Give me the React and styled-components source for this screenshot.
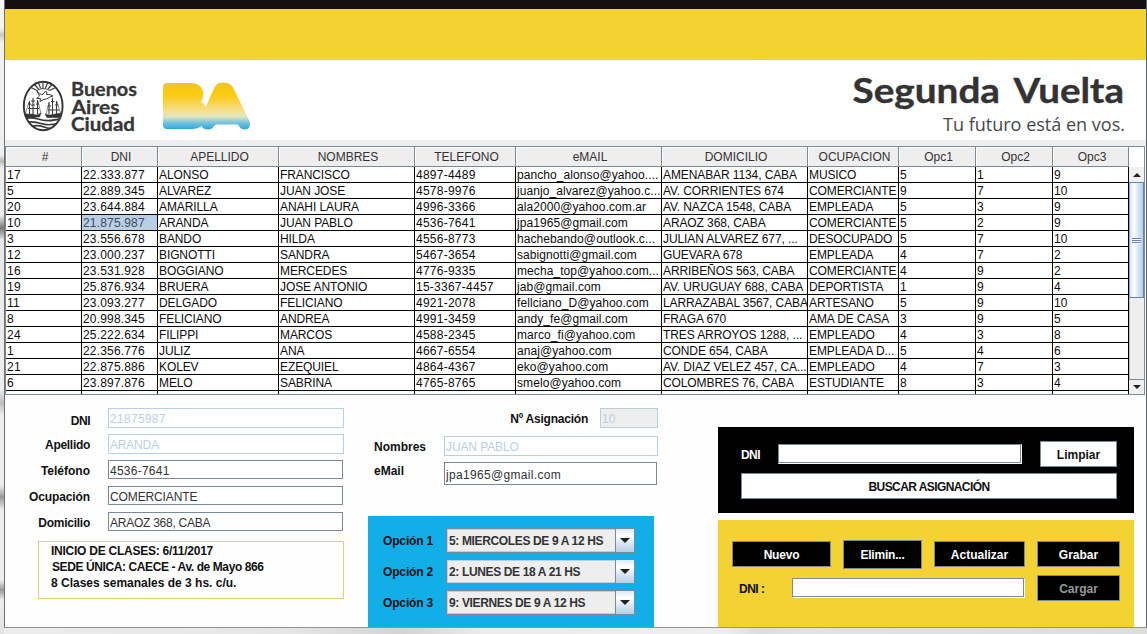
import React from "react";
import styled, { createGlobalStyle } from "styled-components";

const GlobalStyle = createGlobalStyle`
  * { box-sizing: border-box; }
  body { margin: 0; background: #fff; overflow: hidden; }
  body, input, button { font-family: "Liberation Sans", Arial, sans-serif; font-size: 12px; }
`;

const Desktop = styled.div`
  width: 1147px;
  height: 634px;
  padding-left: 4px;
  display: flex;
  flex-direction: column;
  background: linear-gradient(180deg, #f4f4f4 0, #f4f4f4 28px, #c9c9c9 35px, #f0f0f0 42px, #f0f0f0 155px, #b5b5b5 161px, #eee 168px, #eee 215px, #777 228px, #e8e8e8 240px, #eee 390px, #bbb 403px, #eee 415px, #eee 485px, #999 497px, #eee 510px, #eee 580px, #999 590px, #eee 600px, #e4e4e4 628px, #e4e4e4 634px);
`;
const Frame = styled.main`
  height: 628px;
  border-left: 1px solid #6f6f6f;
  border-right: 1px solid #5c6268;
  border-bottom: 1px solid #929292;
  background: #fefefe;
  display: flex;
  flex-direction: column;
`;
const StatusStrip = styled.div`
  height: 6px;
  background: linear-gradient(90deg, #ececec 0, #e6e6e6 25%, #d3d3d3 35%, #ececec 42%, #eee 63%, #ddd 66%, #e2e2e2 70%, #ddd 100%);
`;
const Banner = styled.div`
  flex: none;
  height: 60px;
  border-top: 9px solid #12110f;
  border-bottom: 1px solid #e6d070;
  background: linear-gradient(180deg, #f4d233 0, #f4d233 36px, #f0d328 44px, #f2d434 50px);
`;
const Brand = styled.header`
  flex: none;
  height: 80px;
  padding-right: 12px;
  display: flex;
  justify-content: space-between;
  background: #fff;
`;
const TableArea = styled.section`
  flex: none;
  height: 255px;
  padding: 6px 1px 0 0;
  background: linear-gradient(#eee 6px, #fff 6px);
`;
const TableBox = styled.div`
  display: flex;
  width: 1140px;
  height: 249px;
  border: 1px solid #7a8a99;
  border-top: 0;
  overflow: hidden;
`;
const columns = "76px 76px 121px 136px 101px 146px 146px 91px 77px 77px 76px";
const Grid = styled.div`
  flex: none;
  width: 1123px;
`;
const HeadRow = styled.div`
  display: grid;
  grid-template-columns: ${columns};
  height: 21px;
  border-top: 1px solid #7a8a99;
`;
const HeadCell = styled.div`
  height: 20px;
  background: #eee;
  color: #333;
  border-right: 1px solid #7a8a99;
  border-bottom: 1px solid #7a8a99;
  box-shadow: inset 1px 1px #fff;
  text-align: center;
  line-height: 21px;
  padding-left: 3px;
`;
const Row = styled.div`
  display: grid;
  grid-template-columns: ${columns};
  height: 16px;
`;
const Cell = styled.div`
  border-right: 1px solid #000;
  border-bottom: 1px solid #000;
  padding-left: 1px;
  line-height: 16px;
  white-space: pre;
  overflow: hidden;
  color: ${(p) => (p.$selected ? "#444c58" : "#0c0c0c")};
  background: ${(p) => (p.$selected ? "#b8cfe5" : "#fff")};
  letter-spacing: ${(p) => p.$ls}px;
`;
const Scroll = styled.div`
  flex: 1;
  display: flex;
  flex-direction: column;
  border-top: 1px solid #7a8a99;
`;
const Corner = styled.div`
  height: 20px;
  background: #fff;
`;
const ScrollButton = styled.div`
  flex: none;
  height: 15px;
  display: grid;
  place-items: center;
  background: #f1f1f1;
  border: solid #7a8a99;
  border-width: ${(p) => (p.$down ? "1px 0 0" : "0")};
`;
const Thumb = styled.div`
  height: 116px;
  border: 1px solid #6382bf;
  border-left-color: #8fa6cf;
  background: linear-gradient(90deg, #d5e3f1, #fff 30%, #dce8f3 60%, #b8cfe5);
  display: flex;
  flex-direction: column;
  align-items: center;
  justify-content: center;
  gap: 1px;
`;
const Grip = styled.i`
  width: 9px;
  height: 1px;
  background: #6382bf;
  box-shadow: 0 1px #fff;
`;
const Track = styled.div`
  flex: 1;
  border-left: 1px solid #b4bcc4;
  background: #eee;
`;
const Lower = styled.section`
  flex: 1;
  display: grid;
  grid-template-columns: 363px 350px 1fr;
`;
const Personal = styled.div`
  padding: 13px 0 0 0;
  display: flex;
  flex-direction: column;
`;
const FieldRow = styled.div`
  display: flex;
  align-items: flex-start;
  height: ${(p) => p.$h || 26}px;
`;
const Label = styled.label`
  flex: none;
  width: ${(p) => p.$w}px;
  padding-top: ${(p) => p.$top ?? 5}px;
  padding-left: ${(p) => p.$indent || 0}px;
  line-height: 14px;
  font-weight: bold;
  text-align: ${(p) => p.$align || "left"};
  color: ${(p) => p.$color || "#111"};
  white-space: nowrap;
  letter-spacing: ${(p) => p.$ls || 0}px;
`;
const Input = styled.input`
  flex: none;
  width: ${(p) => p.$w}px;
  height: ${(p) => p.$h || (p.disabled ? 20 : 19)}px;
  margin: 0 0 0 ${(p) => p.$ml || 0}px;
  padding: 2px 1px 0;
  border-radius: 0;
  outline: 0;
  border: 1px solid ${(p) => (p.disabled ? "#b8cfe0" : "#7a8a99")};
  background: ${(p) => (p.$muted ? "#eee" : "#fff")};
  color: ${(p) => (p.disabled ? "#b8cfe5" : "#333")};
  letter-spacing: ${(p) => p.$ls || 0}px;
`;
const LightInput = styled(Input)`
  border-right-color: #fff;
  border-bottom-color: #fff;
  box-shadow: inset -1px -1px #7a8a99;
`;
const Notice = styled.div`
  width: 306px;
  height: 58px;
  margin: 3px 0 0 33px;
  padding: 1px 12px;
  border: 1px solid #e0d468;
  font-weight: bold;
  line-height: 16px;
  color: #111;
`;
const NoticeLine = styled.div`
  padding-left: ${(p) => p.$indent || 0}px;
  letter-spacing: ${(p) => p.$ls || 0}px;
  white-space: nowrap;
`;
const Middle = styled.div`
  padding-top: 13px;
  display: flex;
  flex-direction: column;
`;
const Options = styled.div`
  width: 286px;
  height: 111px;
  margin-top: auto;
  padding: 12px 0 0 15px;
  display: flex;
  flex-direction: column;
  gap: 6px;
  background: #11aee8;
`;
const OptionRow = styled.div`
  display: flex;
  height: 25px;
`;
const Combo = styled.div`
  width: 189px;
  display: flex;
  border: 1px solid #7a8a99;
  box-shadow: inset 0 0 0 1px #b8cfe5;
  background: #eee;
`;
const ComboText = styled.div`
  flex: 1;
  padding-left: 2px;
  line-height: 24px;
  font-weight: bold;
  color: #333;
  white-space: nowrap;
  letter-spacing: -0.36px;
`;
const ComboArrow = styled.div`
  width: 19px;
  border-left: 1px solid #7a8a99;
  display: grid;
  place-items: center;
  background: linear-gradient(#dfe9f3, #fff 30%, #dce8f3 60%, #b8cfe5);
`;
const Actions = styled.div`
  padding: 32px 12px 0 0;
  display: flex;
  flex-direction: column;
  gap: 7px;
`;
const SearchPanel = styled.div`
  height: 86px;
  padding: 14px 16px 0 23px;
  background: #000;
  display: flex;
  flex-direction: column;
  gap: 6px;
`;
const SearchRow = styled.div`
  height: 26px;
  display: flex;
  align-items: center;
`;
const Button = styled.button`
  flex: none;
  width: ${(p) => p.$w}px;
  height: ${(p) => p.$h || 26}px;
  margin: 0 0 0 ${(p) => p.$ml || 0}px;
  padding: 1px 0 0;
  border: 1px solid #7a8a99;
  border-radius: 0;
  font-weight: bold;
  background: ${(p) => (p.$dark ? "#000" : "#fff")};
  color: ${(p) => (p.disabled ? "#999" : p.$dark ? "#fff" : "#111")};
  letter-spacing: ${(p) => p.$ls || 0}px;
`;
const CrudPanel = styled.div`
  flex: 1;
  padding: 20px 13px 0 14px;
  background: #f4d233;
`;
const CrudRow = styled.div`
  display: flex;
  align-items: center;
  gap: 12px;
  height: 28px;
`;
const LoadRow = styled.div`
  display: flex;
  align-items: center;
  height: 26px;
  margin-top: 7px;
  padding-left: 7px;
`;

const Arrow = ({ up, w = 8 }) => (
  <svg width={w} height={w / 2} viewBox="0 0 8 4">
    <path d={up ? "M0 4 4 0 8 4Z" : "M0 0 8 0 4 4Z"} fill="#222" />
  </svg>
);

const CityLogo = () => (
  <svg width="260" height="80" viewBox="5 60 260 80">
    <defs>
      <linearGradient id="ba" gradientUnits="userSpaceOnUse" x1="0" y1="82" x2="0" y2="130">
        <stop offset="0" stopColor="#eec42a" />
        <stop offset=".25" stopColor="#fccb0c" />
        <stop offset=".38" stopColor="#fad03a" />
        <stop offset=".6" stopColor="#f6e08e" />
        <stop offset=".72" stopColor="#e2e6c0" />
        <stop offset=".84" stopColor="#7cc6dc" />
        <stop offset="1" stopColor="#1fa4dc" />
      </linearGradient>
      <clipPath id="seal"><ellipse cx="43.2" cy="106" rx="19" ry="24" /></clipPath>
    </defs>
    <ellipse cx="43.2" cy="106" rx="19.4" ry="24.2" fill="#fff" stroke="#353535" strokeWidth="1.9" />
    <g clipPath="url(#seal)" stroke="#3a3a3a" fill="none">
      <path d="M43 88V83M40.500 88 38.500 83M45.500 88 47.500 83M38.500 89 34.500 84.500M48 89 52 84.500M37 90.500 31 87.500M49.500 90.500 55.500 87.500" strokeWidth="1.2" />
      <path d="M37 90.500Q43 86.500 49.500 90.500" strokeWidth="1" />
      <path d="M37 91Q39 95 43 94.500L45 91.500 47 92 46.500 94.500Q50 94 53 96Q49 97 46.500 99L43 99.500 40 101.500 40.500 98.500 36.500 98.500Q38.500 97 39.500 96Z" strokeWidth="1" />
      <path d="M29.500 101V115M33 98V115M37.500 100V114M49 102V114M52.500 98V115M56.500 101V115" strokeWidth="1.1" />
      <path d="M28 104H31M31 101H35M36 104H39M31 105H35M28 108.500H39M47.500 106H51M51 101.500H54.500M55 105H58.500M48 110H59" strokeWidth="1" />
      <path d="M29 102 25.500 113M38 101 41 114M49 103 46 114M57 102 60.500 113" strokeWidth=".6" />
      <path d="M24 113Q28 115 32 114Q37 116.500 41 113L39.500 117H26ZM45 114Q50 116 55 114L62 113 59 117.500H47Z" fill="#333" strokeWidth=".6" />
      <path d="M22 119Q30 116.500 38 119T54 120T65 118" strokeWidth="1.8" />
      <path d="M24 123Q32 120.500 41 123.500T62 122" strokeWidth="1.6" />
      <path d="M28 127.500Q36 124 44 127T58 126" strokeWidth="1.6" />
    </g>
    <g fill="#363636" stroke="#363636" strokeWidth=".3" fontFamily="Lato, sans-serif" fontWeight="700" fontSize="18">
      <text x="71" y="95.800" textLength="66" lengthAdjust="spacingAndGlyphs">Buenos</text>
      <text x="71.500" y="113.500" textLength="48" lengthAdjust="spacingAndGlyphs">Aires</text>
      <text x="71" y="131" textLength="64" lengthAdjust="spacingAndGlyphs">Ciudad</text>
    </g>
    <path d="M167 83H191C200 83 204.500 90 203.300 96Q202.500 100 200.800 102.500Q204.500 102.500 205 107.500Q207.500 104 208.500 100.500L214.500 87.500Q217 82.500 223 82.500Q230 82.500 233 87.500L249.500 121C251.500 126 248.500 129.500 245 129.500Q240.500 129.500 238.800 125.800Q238.300 124.500 236 124.500H217Q214.800 124.500 213.800 126.300Q212 129.500 208 129.500Q203.500 129.500 201.500 126Q197.500 129 192 129H167Q163 129 163 125V87Q163 83 167 83Z" fill="url(#ba)" />
  </svg>
);

const Slogan = () => (
  <svg width="284" height="80" viewBox="850 60 284 80">
    <g fontFamily="Lato, sans-serif" fontWeight="700" fontSize="34.500" fill="#333" stroke="#333" strokeWidth=".4">
      <text x="852.500" y="103" textLength="147.500" lengthAdjust="spacingAndGlyphs">Segunda</text>
      <text x="1013.500" y="103" textLength="110.500" lengthAdjust="spacingAndGlyphs">Vuelta</text>
    </g>
    <text x="943" y="130.500" textLength="182" lengthAdjust="spacingAndGlyphs" fontFamily="Open Sans, sans-serif" fontSize="17.500" fill="#484848">Tu futuro está en vos.</text>
  </svg>
);

const heads = ["#", "DNI", "APELLIDO", "NOMBRES", "TELEFONO", "eMAIL", "DOMICILIO", "OCUPACION", "Opc1", "Opc2", "Opc3"];
const spacing = [0.3, 0.17, -0.1, -0.1, 0.25, 0.08, -0.1, -0.12, 0.2, 0.2, 0.2];
const rows = [
  ["17", "22.333.877", "ALONSO", "FRANCISCO", "4897-4489", "pancho_alonso@yahoo....", "AMENABAR 1134, CABA", "MUSICO", "5", "1", "9"],
  ["5", "22.889.345", "ALVAREZ", "JUAN JOSE", "4578-9976", "juanjo_alvarez@yahoo.c...", "AV. CORRIENTES 674", "COMERCIANTE", "9", "7", "10"],
  ["20", "23.644.884", "AMARILLA", "ANAHI LAURA", "4996-3366", "ala2000@yahoo.com.ar", "AV. NAZCA 1548, CABA", "EMPLEADA", "5", "3", "9"],
  ["10", "21.875.987", "ARANDA", "JUAN PABLO", "4536-7641", "jpa1965@gmail.com", "ARAOZ 368, CABA", "COMERCIANTE", "5", "2", "9"],
  ["3", "23.556.678", "BANDO", "HILDA", "4556-8773", "hachebando@outlook.c...", "JULIAN ALVAREZ 677, ...", "DESOCUPADO", "5", "7", "10"],
  ["12", "23.000.237", "BIGNOTTI", "SANDRA", "5467-3654", "sabignotti@gmail.com", "GUEVARA 678", "EMPLEADA", "4", "7", "2"],
  ["16", "23.531.928", "BOGGIANO", "MERCEDES", "4776-9335", "mecha_top@yahoo.com...", "ARRIBEÑOS 563, CABA", "COMERCIANTE", "4", "9", "2"],
  ["19", "25.876.934", "BRUERA", "JOSE ANTONIO", "15-3367-4457", "jab@gmail.com", "AV. URUGUAY 688, CABA", "DEPORTISTA", "1", "9", "4"],
  ["11", "23.093.277", "DELGADO", "FELICIANO", "4921-2078", "fellciano_D@yahoo.com", "LARRAZABAL 3567, CABA", "ARTESANO", "5", "9", "10"],
  ["8", "20.998.345", "FELICIANO", "ANDREA", "4991-3459", "andy_fe@gmail.com", "FRAGA 670", "AMA DE CASA", "3", "9", "5"],
  ["24", "25.222.634", "FILIPPI", "MARCOS", "4588-2345", "marco_fi@yahoo.com", "TRES ARROYOS 1288, ...", "EMPLEADO", "4", "3", "8"],
  ["1", "22.356.776", "JULIZ", "ANA", "4667-6554", "anaj@yahoo.com", "CONDE 654, CABA", "EMPLEADA D...", "5", "4", "6"],
  ["21", "22.875.886", "KOLEV", "EZEQUIEL", "4864-4367", "eko@yahoo.com", "AV. DIAZ VELEZ 457, CA...", "EMPLEADO", "4", "7", "3"],
  ["6", "23.897.876", "MELO", "SABRINA", "4765-8765", "smelo@yahoo.com", "COLOMBRES 76, CABA", "ESTUDIANTE", "8", "3", "4"],
  ["", "", "", "", "", "", "", "", "", "", ""],
];
const options = [
  ["Opción 1", "5: MIERCOLES DE 9 A 12 HS"],
  ["Opción 2", "2: LUNES DE 18 A 21 HS"],
  ["Opción 3", "9: VIERNES DE 9 A 12 HS"],
];

export default function App() {
  return (
    <Desktop>
      <GlobalStyle />
      <Frame>
        <Banner />
        <Brand>
          <CityLogo />
          <Slogan />
        </Brand>
        <TableArea>
          <TableBox>
            <Grid>
              <HeadRow>
                {heads.map((h) => <HeadCell key={h}>{h}</HeadCell>)}
              </HeadRow>
              {rows.map((r, i) => (
                <Row key={i}>
                  {r.map((c, j) => (
                    <Cell key={j} $ls={spacing[j]} $selected={i === 3 && j === 1}>{c}</Cell>
                  ))}
                </Row>
              ))}
            </Grid>
            <Scroll>
              <Corner />
              <ScrollButton><Arrow up /></ScrollButton>
              <Thumb><Grip /><Grip /><Grip /></Thumb>
              <Track />
              <ScrollButton $down><Arrow /></ScrollButton>
            </Scroll>
          </TableBox>
        </TableArea>
        <Lower>
          <Personal>
            <FieldRow>
              <Label $w={85} $align="right" $top={6} $ls={-0.5}>DNI</Label>
              <Input $w={236} $ml={18} $ls={0.3} disabled defaultValue="21875987" />
            </FieldRow>
            <FieldRow>
              <Label $w={85} $align="right" $top={4} $ls={-0.3}>Apellido</Label>
              <Input $w={236} $ml={18} $ls={-0.2} disabled defaultValue="ARANDA" />
            </FieldRow>
            <FieldRow>
              <Label $w={85} $align="right" $top={4}>Teléfono</Label>
              <Input $w={235} $ml={18} $ls={0.25} defaultValue="4536-7641" />
            </FieldRow>
            <FieldRow>
              <Label $w={85} $align="right" $top={4} $ls={-0.12}>Ocupación</Label>
              <Input $w={235} $ml={18} $ls={-0.12} defaultValue="COMERCIANTE" />
            </FieldRow>
            <FieldRow>
              <Label $w={85} $align="right" $top={4} $ls={-0.25}>Domicilio</Label>
              <Input $w={235} $ml={18} $ls={-0.25} defaultValue="ARAOZ 368, CABA" />
            </FieldRow>
            <Notice>
              <NoticeLine $ls={-0.25}>INICIO DE CLASES: 6/11/2017</NoticeLine>
              <NoticeLine $indent={1} $ls={-0.4}>SEDE ÚNICA: CAECE - Av. de Mayo 866</NoticeLine>
              <NoticeLine>8 Clases semanales de 3 hs. c/u.</NoticeLine>
            </Notice>
          </Personal>
          <Middle>
            <FieldRow $h={28}>
              <Label $w={220} $align="right" $top={4} $ls={-0.22}>Nº Asignación</Label>
              <Input $w={58} $ml={12} $muted disabled defaultValue="10" />
            </FieldRow>
            <FieldRow>
              <Label $w={70} $top={4} $indent={6}>Nombres</Label>
              <Input $w={214} $ml={6} $ls={-0.1} disabled defaultValue="JUAN PABLO" />
            </FieldRow>
            <FieldRow>
              <Label $w={70} $top={2} $indent={6}>eMail</Label>
              <Input $w={213} $ml={6} $h={23} $ls={0.33} defaultValue="jpa1965@gmail.com" />
            </FieldRow>
            <Options>
              {options.map(([name, value]) => (
                <OptionRow key={name}>
                  <Label $w={63} $top={6} $ls={-0.15}>{name}</Label>
                  <Combo>
                    <ComboText>{value}</ComboText>
                    <ComboArrow><Arrow w={10} /></ComboArrow>
                  </Combo>
                </OptionRow>
              ))}
            </Options>
          </Middle>
          <Actions>
            <SearchPanel>
              <SearchRow>
                <Label $w={37} $top={1} $color="#fff" $ls={-0.6}>DNI</Label>
                <LightInput $w={244} $h={20} />
                <Button $w={77} $ml={18}>Limpiar</Button>
              </SearchRow>
              <SearchRow>
                <Button $w={376} $ls={-0.58}>BUSCAR ASIGNACIÓN</Button>
              </SearchRow>
            </SearchPanel>
            <CrudPanel>
              <CrudRow>
                <Button $dark $w={99} $ls={-0.2}>Nuevo</Button>
                <Button $dark $w={79} $h={29} $ls={-0.2}>Elimin...</Button>
                <Button $dark $w={91}>Actualizar</Button>
                <Button $dark $w={83}>Grabar</Button>
              </CrudRow>
              <LoadRow>
                <Label $w={53} $top={1} $ls={-0.5}>DNI :</Label>
                <LightInput $w={233} $h={20} />
                <Button $dark $w={83} $ml={12} disabled>Cargar</Button>
              </LoadRow>
            </CrudPanel>
          </Actions>
        </Lower>
      </Frame>
      <StatusStrip />
    </Desktop>
  );
}
